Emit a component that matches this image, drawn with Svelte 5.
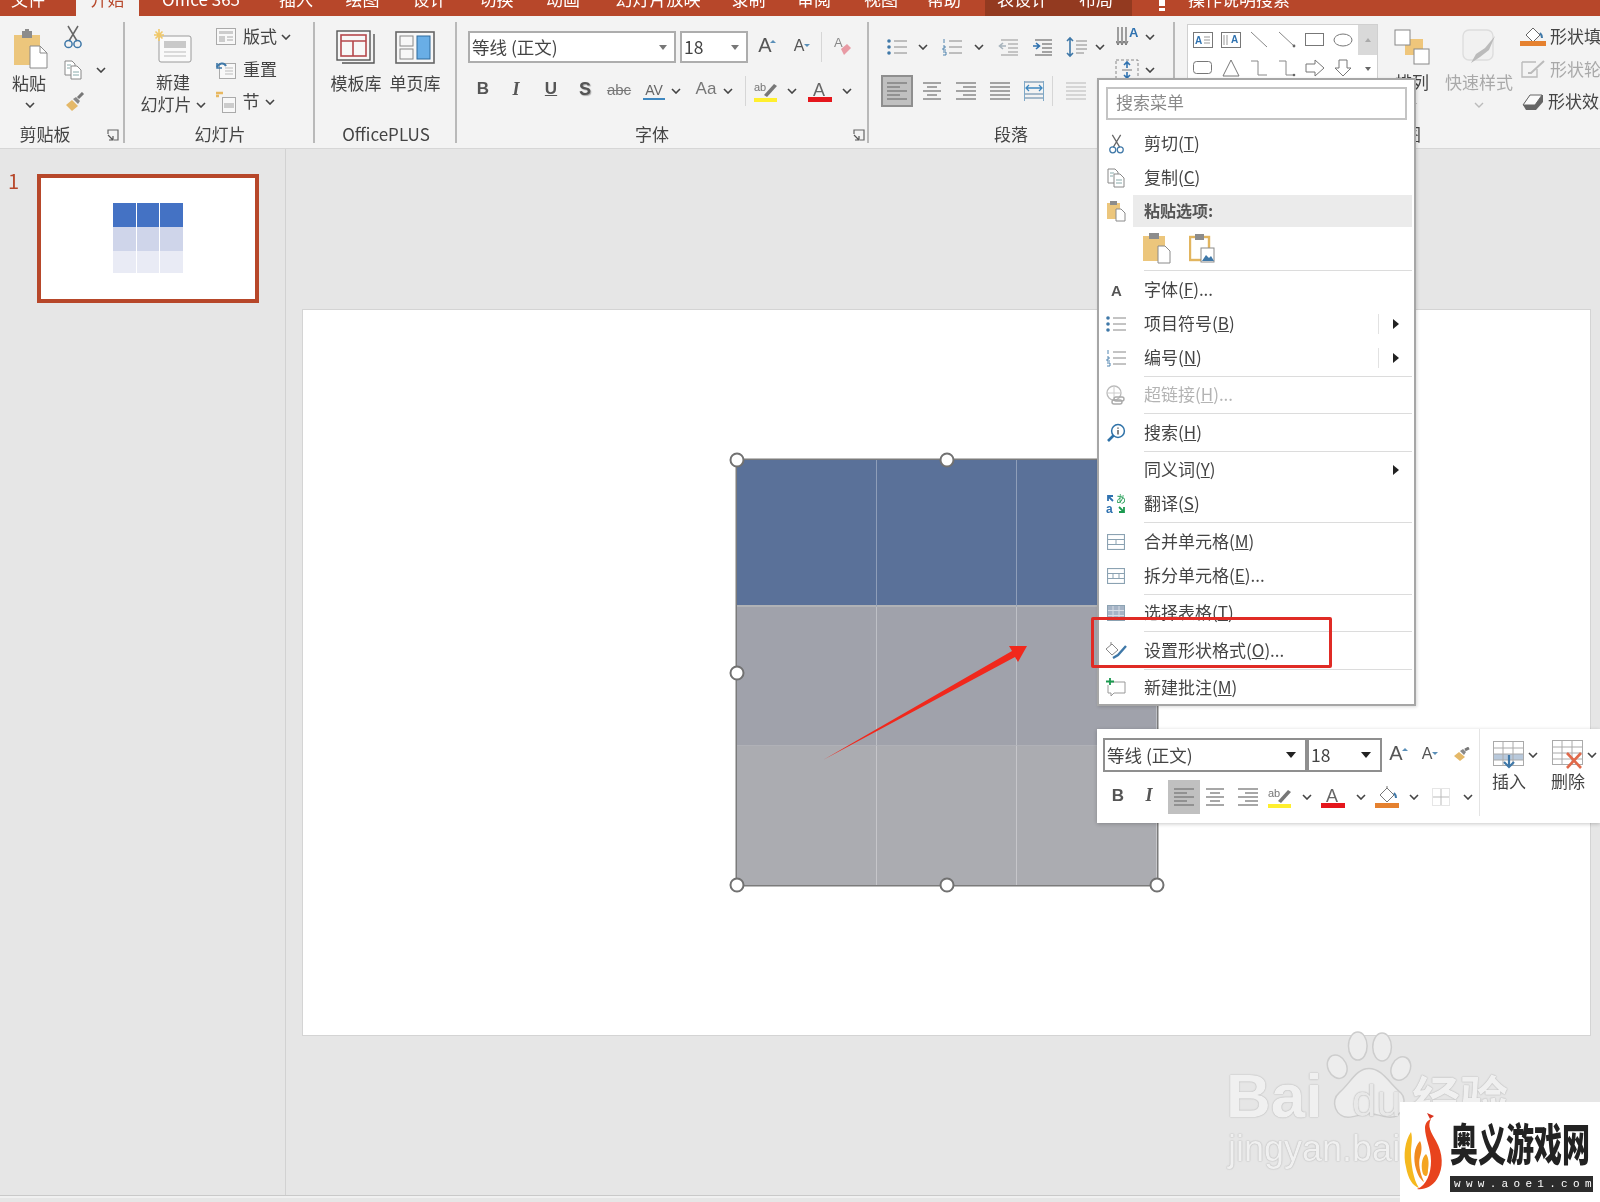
<script>
  const ln = (d, c = '#8a8a8a', w = 1) => `<path d="${d}" stroke="${c}" stroke-width="${w}"/>`;
  const bars = (arr, c = '#777') => arr.map(([a, b, y]) => ln(`M${a} ${y}H${b}`, c, 1.3)).join('');
  const ics = {
    chev: [10, 6, ln('M1 1l4 4 4-4', '#444', 1.6)],
    chevL: [10, 6, ln('M1 1l4 4 4-4', '#bbb', 1.4)],
    launch: [12, 12, ln('M1 5V1h10v10H7', '#666', 1.2) + ln('M1 6l5 5M6 7v4H2', '#555', 1.2)],
    paste: [34, 40, `<rect x="0" y="6" width="26" height="30" fill="#ecc67c"/><rect x="8" y="2" width="10" height="7" fill="#8c8c8c"/><rect x="11" y="0" width="4" height="4" fill="#8c8c8c"/><path d="M16 17h10l7 7v15H16z" fill="#fff" stroke="#8a8a8a"/><path d="M26 17v7h7" stroke="#8a8a8a"/>`],
    paste2: [28, 32, `<rect x="0" y="4" width="22" height="25" fill="#ecc67c"/><rect x="6" y="1" width="10" height="6" fill="#8c8c8c"/><path d="M15 14h7l5 5v12H15z" fill="#fff" stroke="#8a8a8a"/>`],
    pasteImg: [26, 30, `<rect x="1" y="4" width="19" height="23" fill="#fff" stroke="#e2b55f" stroke-width="2.4"/><rect x="6" y="1" width="9" height="6" fill="#8c8c8c"/><rect x="12" y="15" width="13" height="14" fill="#fff" stroke="#8a8a8a"/><path d="M13 28l4-6 3 3 2-2 3 5z" fill="#3f78a8"/>`],
    pasteS: [20, 22, `<rect x="1" y="3" width="13" height="16" fill="#ecc67c"/><rect x="4" y="1" width="7" height="4" fill="#8c8c8c"/><path d="M10 9h5l4 4v8h-9z" fill="#fff" stroke="#8a8a8a"/>`],
    cut: [20, 24, ln('M5 1l9 15M15 1L6 16', '#666', 1.5) + `<circle cx="5.5" cy="19" r="3.6" stroke="#3f78a8" stroke-width="1.5"/><circle cx="14.5" cy="19" r="3.6" stroke="#3f78a8" stroke-width="1.5"/>`],
    copy: [18, 20, `<path d="M1 1h7l3 3v11H1z" fill="#fff" stroke="#888"/><path d="M7 6h6l4 4v9H7z" fill="#fff" stroke="#888"/>` + ln('M3 5h4M3 8h3M9 12h6M9 15h6', '#8aa')],
    painter: [20, 20, `<path d="M1 13l6-5 6 6-6 5z" fill="#e4b868"/><path d="M8 7l3-2 4 4-2 3z" fill="#888"/>` + ln('M13 6l5-5', '#777', 3)],
    newslide: [38, 34, `<rect x="5" y="7" width="32" height="26" rx="2" fill="#fafafa" stroke="#9a9a9a"/><rect x="10" y="12" width="22" height="7" fill="#c9c9c9"/>` + ln('M10 23h22M10 27h22', '#bbb') + ln('M5 0v12M0 6h10M1.5 2.5l7 7M8.5 2.5l-7 7', '#f0c868', 1.6)],
    layout: [20, 18, `<rect x=".5" y=".5" width="19" height="16" fill="#f8f8f8" stroke="#aaa"/><rect x="3" y="3" width="14" height="3" fill="#ccc"/><rect x="3" y="8" width="6" height="6" fill="#ccc"/>` + ln('M11 9h6M11 12h6', '#aaa')],
    reset: [20, 18, `<rect x="3.5" y="2.5" width="16" height="15" fill="#f8f8f8" stroke="#aaa"/>` + ln('M9 7h8M9 10h8M9 13h8', '#bbb') + ln('M1 6c2-4 7-5 9-1', '#3f78a8', 2) + ln('M1 2v5h5', '#3f78a8', 1.6)],
    section: [20, 22, `<rect x="6.5" y="6.5" width="13" height="15" fill="#f8f8f8" stroke="#aaa"/><rect x="8" y="12" width="10" height="5" fill="#ccc"/>` + ln('M0 2h7M0 5h3', '#e8b860', 2.4)],
    tmpl: [40, 36, ln('M38 4v29H6', '#555', 1.4) + `<rect x="1" y="1" width="33" height="29" fill="#f7f7f7" stroke="#555" stroke-width="1.4"/><rect x="5" y="5" width="25" height="21" stroke="#b5484c" stroke-width="1.6"/>` + ln('M5 11h25M17 11v15', '#b5484c', 1.6)],
    single: [40, 34, `<rect x="1" y="1" width="38" height="31" fill="#f7f7f7" stroke="#666" stroke-width="1.6"/><rect x="5" y="5" width="13" height="10" stroke="#888"/><rect x="5" y="18" width="13" height="10" stroke="#888"/><rect x="22" y="5" width="13" height="23" fill="#69aee6" stroke="#2f6a9c"/>`],
    clear: [18, 22, `<path d="M7 13l6-5 4 4-7 7z" fill="#e89aa4"/><text x="0" y="11" font-size="13" fill="#888" font-family="Liberation Sans">A</text>`],
    highlight: [24, 22, `<text x="0" y="11" font-size="11" fill="#777" font-family="Liberation Sans">ab</text><path d="M10 15l10-11 3 2-10 11z" fill="#777"/><rect x="0" y="18" width="23" height="5" fill="#ffef2e"/>`],
    colorA: [24, 22, `<text x="5" y="16" font-size="18" fill="#666" font-family="Liberation Sans">A</text><rect x="0" y="17" width="24" height="5" fill="#e5161c"/>`],
    fill: [24, 24, `<path d="M5 10l7-7 7 7-7 7z" fill="#fff" stroke="#777"/>` + ln('M12 3v-2', '#777') + ln('M19 8c2 2 2 4 2 5', '#3f78a8', 2) + `<rect x="0" y="18" width="24" height="5" fill="#e5812f"/>`],
    bullets: [20, 18, `<circle cx="2" cy="3" r="1.8" fill="#3f78a8"/><circle cx="2" cy="9" r="1.8" fill="#3f78a8"/><circle cx="2" cy="15" r="1.8" fill="#3f78a8"/>` + ln('M7 3h13M7 9h13M7 15h13', '#888')],
    numbers: [20, 18, ln('M2 1v4M1 8h2v2H1v2h3M1 14h3v3H1', '#3f78a8', .9) + ln('M7 3h13M7 9h13M7 15h13', '#888')],
    outdent: [20, 18, bars([[3, 20, 2], [10, 20, 6], [10, 20, 10], [10, 20, 14], [3, 20, 17]], '#aaa') + ln('M8 8H2M5 5L1.5 8 5 11', '#a8b4bd', 1.6)],
    indent: [20, 18, bars([[3, 20, 2], [10, 20, 6], [10, 20, 10], [10, 20, 14], [3, 20, 17]], '#777') + ln('M1 8h6M4 5l3.5 3L4 11', '#2f72b0', 1.6)],
    spacing: [22, 22, ln('M4 2v18M1 5l3-3 3 3M1 17l3 3 3-3', '#3f78a8', 1.6) + ln('M10 5h11M10 9h11M10 13h11M10 17h8', '#888')],
    textdir: [24, 24, ln('M2 2v16M6 2v16M10 2v16', '#666', 1.2) + ln('M0 16l2 4 2-4M4 16l2 4 2-4M8 16l2 4 2-4', '#666', 1) + `<text x="13" y="12" font-size="13" fill="#2f72b0" font-weight="700" font-family="Liberation Sans">A</text>`],
    valign: [24, 24, `<rect x="1" y="2" width="22" height="20" stroke="#888" stroke-dasharray="3 2"/>` + ln('M12 4v6M9 7l3-3 3 3M12 14v6M9 17l3 3 3-3', '#2f72b0', 1.6) + ln('M7 12h10', '#777')],
    arrange: [36, 36, `<rect x="11" y="10" width="18" height="16" fill="#efc67b"/><rect x="1" y="1" width="15" height="15" fill="#fff" stroke="#888"/><rect x="20" y="20" width="15" height="15" fill="#fff" stroke="#888"/>`],
    quick: [34, 36, `<rect x="1" y="1" width="30" height="30" rx="6" fill="#f1f1f1" stroke="#ddd" stroke-width="1.4"/><path d="M9 34l5-9 9-6 10-12-6 14-9 7z" fill="#bbb"/>`],
    shapeFill: [26, 22, `<path d="M6 9l7-7 7 7-7 7z" fill="#fff" stroke="#666"/>` + ln('M20 7c2 2 2 4 2 5', '#3f78a8', 2) + `<rect x="0" y="15" width="26" height="5" fill="#e5812f"/>`],
    shapeLine: [24, 20, `<path d="M1 2h14M1 2v15h15V9" stroke="#bbb" stroke-width="1.4"/><path d="M7 13l3 0L23 1" stroke="#bbb" stroke-width="2"/>`],
    shapeFx: [24, 20, `<path d="M2 13L9 3h13v7l-7 8H5z" fill="#666"/><path d="M2 13L9 3h12l-7 10z" fill="#fafafa" stroke="#666"/>`],
    sTextbox: [20, 16, `<rect x=".5" y=".5" width="19" height="15" stroke="#777"/><text x="2" y="12" font-size="10" font-weight="700" fill="#2f72b0" font-family="Liberation Sans">A</text>` + ln('M11 5h6M11 8h6M11 11h6', '#999')],
    sVText: [20, 16, `<rect x=".5" y=".5" width="19" height="15" stroke="#777"/><text x="10" y="11" font-size="10" font-weight="700" fill="#2f72b0" font-family="Liberation Sans">A</text>` + ln('M3 3v10M6 3v10', '#999')],
    sLine: [18, 18, ln('M1 1l16 15', '#888')],
    sArrow: [18, 18, ln('M1 1l15 14', '#888') + `<circle cx="16" cy="15" r="1.4" fill="#666"/>`],
    sRect: [20, 14, `<rect x=".5" y=".5" width="18" height="12" stroke="#777"/>`],
    sOval: [20, 14, `<ellipse cx="10" cy="7" rx="9" ry="6" stroke="#777"/>`],
    sRound: [20, 14, `<rect x=".5" y=".5" width="18" height="12" rx="3" stroke="#777"/>`],
    sTri: [18, 18, `<path d="M9 1l8 16H1z" stroke="#777"/>`],
    sElbow: [18, 18, ln('M1 2h7v14h9', '#888')],
    sElbowA: [18, 18, ln('M1 2h7v14h8', '#888') + `<circle cx="16" cy="16" r="1.3" fill="#666"/>`],
    sRight: [20, 18, `<path d="M1 5h9V1l9 8-9 8v-4H1z" stroke="#777"/>`],
    sDown: [18, 18, `<path d="M5 1h8v8h4l-8 8-8-8h4z" stroke="#777"/>`],
    letterA: [18, 18, `<text x="4" y="15" font-size="15" font-weight="700" fill="#555" font-family="Liberation Sans">A</text>`],
    link: [20, 20, `<circle cx="8" cy="8" r="7" stroke="#bbb" stroke-width="1.3"/>` + ln('M1 8h14M8 1v14', '#ccc') + `<rect x="8" y="12" width="10" height="4" rx="2" stroke="#aaa" stroke-width="1.4"/><rect x="6" y="15" width="10" height="4" rx="2" stroke="#aaa" stroke-width="1.4"/>`],
    search: [20, 20, `<circle cx="12" cy="8" r="6.4" stroke="#2f72a8" stroke-width="1.5"/>` + ln('M7.5 12.5L2 18', '#2f72a8', 2.6) + ln('M12 7v4.5', '#444', 1.3) + ln('M12 4.5v1.2', '#444', 1.3)],
    translate: [20, 20, `<text x="10" y="9" font-size="10" fill="#1c9a50" font-family="Noto Sans CJK JP">あ</text><text x="0" y="19" font-size="12" font-weight="700" fill="#2f72b0" font-family="Liberation Sans">a</text>` + ln('M2 2l5 5M2 7V2h5', '#2f72b0', 1.8) + ln('M18 18l-5-5M18 13v5h-5', '#1c9a50', 1.8)],
    merge: [18, 16, `<rect x=".5" y=".5" width="17" height="15" stroke="#8ba2b2" stroke-width="1.2"/>` + ln('M1 5.5h16M1 10.5h16M9 5.5v5', '#8ba2b2')],
    split: [18, 16, `<rect x=".5" y=".5" width="17" height="15" stroke="#8ba2b2" stroke-width="1.2"/>` + ln('M1 5.5h16M1 10.5h16M6 5.5v5M12 5.5v5', '#8ba2b2')],
    selTable: [18, 16, `<rect x=".5" y=".5" width="17" height="15" fill="#a6b4c6" stroke="#8ba2b2"/>` + ln('M1 5.5h16M1 10.5h16M6 1v14M12 1v14', '#d6dde5')],
    fmt: [22, 20, `<path d="M1 8l6-5 6 6-6 5z" fill="#fff" stroke="#888"/>` + ln('M6 1v3', '#888') + ln('M8 17l5-3 8-9', '#3f78a8', 2.4)],
    comment: [20, 20, `<path d="M4 4h15v11H8l-3 3v-3H2V7" stroke="#999"/>` + ln('M4 0v7M0 3.5h8', '#1c9a50', 1.8)],
    miniPainter: [18, 16, `<path d="M1 9l5-4 6 5-5 4z" fill="#e4b868"/><path d="M7 4l3-2 3 3-2 3z" fill="#888"/>` + ln('M12 3l4-2', '#777', 3)],
    border: [18, 18, `<rect x=".5" y=".5" width="17" height="17" stroke="#ccc" stroke-dasharray="1 1"/>` + ln('M1 9h16M9 1v16', '#bbb')],
    insert: [32, 28, `<rect x=".5" y=".5" width="30" height="24" fill="#fff" stroke="#aaa"/><rect x="1" y="13" width="29" height="6" fill="#b8c9dc"/>` + ln('M1 7h30M1 13h30M1 19h30M10 1v24M20 1v24', '#aaa') + ln('M16 14v11M11 21l5 5 5-5', '#3f78a8', 2.2)],
    remove: [32, 30, `<rect x=".5" y=".5" width="30" height="24" fill="#fff" stroke="#aaa"/>` + ln('M1 7h30M1 13h30M1 19h30M10 1v24M20 1v24', '#aaa') + ln('M15 13l14 15M29 13L15 28', '#e0694a', 2.6)]
  };
  const aligns = {
    aLeft: [[0, 20, 2], [0, 13, 6], [0, 20, 10], [0, 13, 14], [0, 20, 18]],
    aCenter: [[1, 19, 2], [5, 15, 6], [1, 19, 10], [5, 15, 14], [1, 19, 18]],
    aRight: [[0, 20, 2], [7, 20, 6], [0, 20, 10], [7, 20, 14], [0, 20, 18]],
    aJust: [[0, 20, 2], [0, 20, 6], [0, 20, 10], [0, 20, 14], [0, 20, 18]],
    aCols: [[0, 20, 2], [0, 20, 6], [0, 20, 10], [0, 20, 14], [0, 20, 18]]
  };
  for (const k in aligns) ics[k] = [20, 20, bars(aligns[k], k === 'aCols' ? '#c4c4c4' : '#777')];
  ics.aDist = [20, 22, bars([[1, 19, 2], [1, 19, 14], [1, 19, 18]], '#7a9ab4') + ln('M2 8h16M5 5L2 8l3 3M15 5l3 3-3 3', '#3f88c0', 1.3) + ln('M.5 1v20M19.5 1v20', '#7fa9c8')];

  const svg = (n, w, h) => {
    const [vw, vh, body] = ics[n];
    return `<svg width="${w ?? vw}" height="${h ?? vh}" viewBox="0 0 ${vw} ${vh}" fill="none" style="display:block">${body}</svg>`;
  };
  const i = (c, n, w, h) => ({ c, w: w ?? ics[n][0], html: svg(n, w, h) });
  const t = (c, text, w, cls = '') => ({ c, w, text, cls });
  const ch = (c) => i(c, 'chev');

  function place(start, items) {
    let x = start;
    return items.map((it) => {
      const ml = it.c - it.w / 2 - x;
      x = it.c + it.w / 2;
      return { ...it, ml };
    });
  }

  const tabs = [
    ['文件', 76, 'first'], ['开始', 63, 'active'], ['Office 365', 124, ''], ['插入', 66, ''], ['绘图', 67, ''], ['设计', 67, ''],
    ['切换', 67, ''], ['动画', 66, ''], ['幻灯片放映', 124, ''], ['录制', 57, ''], ['审阅', 74, ''], ['视图', 60, ''], ['帮助', 66, ''],
    ['', 8, ''], ['表设计', 75, 'dark'], ['布局', 72, 'dark']
  ];

  const gallery = ['sTextbox', 'sVText', 'sLine', 'sArrow', 'sRect', 'sOval', 'sRound', 'sTri', 'sElbow', 'sElbowA', 'sRight', 'sDown'];

  const menu = [
    { ic: 'cut', a: '剪切', k: 'T' }, { ic: 'copy', a: '复制', k: 'C' }, { head: true }, { icons: true }, { sep: true },
    { ic: 'letterA', a: '字体', k: 'F', more: true }, { ic: 'bullets', a: '项目符号', k: 'B', sub: true }, { ic: 'numbers', a: '编号', k: 'N', sub: true }, { sep: true },
    { ic: 'link', a: '超链接', k: 'H', more: true, off: true }, { sep: true },
    { ic: 'search', a: '搜索', k: 'H' }, { sep: true },
    { a: '同义词', k: 'Y', sub: true, nobar: true }, { ic: 'translate', a: '翻译', k: 'S' }, { sep: true },
    { ic: 'merge', a: '合并单元格', k: 'M' }, { ic: 'split', a: '拆分单元格', k: 'E', more: true }, { sep: true },
    { ic: 'selTable', a: '选择表格', k: 'T' }, { sep: true },
    { ic: 'fmt', a: '设置形状格式', k: 'O', more: true }, { sep: true },
    { ic: 'comment', a: '新建批注', k: 'M' }
  ];
</script>

{#snippet row(start, items, cls = '')}
  <div class="row {cls}">
    {#each place(start, items) as it}
      <span class="cell {it.cls ?? ''}" class:tx={!it.html} style="margin-left:{it.ml}px;width:{it.w}px">
        {#if it.html}{@html it.html}{:else}{it.text}{/if}
      </span>
    {/each}
  </div>
{/snippet}

<div class="app">
  <header class="tabs">
    {#each tabs as [label, w, cls]}
      <div class="tab {cls}" style="width:{w}px"><span>{label}</span></div>
    {/each}
    <div class="tell">
      <svg width="12" height="14" viewBox="0 0 12 14" fill="none"><path d="M3 0h6v6H3zM3 8h6v3H3z" fill="#fff"/></svg>
      <span>操作说明搜索</span>
    </div>
  </header>

  <section class="ribbon">
    <div class="group g1">
      <div class="body flexrow">
        <div class="big w-paste">
          {@render row(0, [i(31, 'paste')], 'h38 pt14')}
          {@render row(0, [t(29, '粘贴', 40)], 'h32')}
          {@render row(0, [ch(30)], 'h10')}
        </div>
        <div class="small">
          {@render row(60, [i(73, 'cut')])}
          {@render row(60, [i(73, 'copy'), ch(101)])}
          {@render row(60, [i(75, 'painter')])}
        </div>
      </div>
      {@render row(0, [t(45, '剪贴板', 60), i(113, 'launch')], 'label')}
    </div>

    <div class="group g2">
      <div class="body flexrow">
        <div class="big w-new">
          {@render row(126, [i(173, 'newslide')], 'h33 pt13')}
          {@render row(126, [t(173, '新建', 40)], 'h22 mt10')}
          {@render row(126, [t(166, '幻灯片', 52), ch(201)], 'h22')}
        </div>
        <div class="small">
          {@render row(216, [i(226, 'layout'), t(260, '版式', 36), ch(286)])}
          {@render row(216, [i(226, 'reset'), t(260, '重置', 36)])}
          {@render row(216, [i(226, 'section'), t(251, '节', 18), ch(270)])}
        </div>
      </div>
      {@render row(126, [t(220, '幻灯片', 60)], 'label')}
    </div>

    <div class="group g3">
      <div class="body">
        {@render row(316, [i(356, 'tmpl'), i(415, 'single')], 'h36 pt14')}
        {@render row(316, [t(356, '模板库', 54), t(415, '单页库', 54)], 'h24 mt6')}
      </div>
      {@render row(316, [t(386, 'OfficePLUS', 100)], 'label')}
    </div>

    <div class="group g4">
      <div class="body two">
        {@render row(458, [t(572, '等线 (正文)', 208, 'combo'), t(714, '18', 68, 'combo'), t(765, 'A', 18, 'gA'), t(799, 'A', 16, 'sA'), t(821, '', 1, 'vbar'), i(843, 'clear')])}
        {@render row(458, [
          t(483, 'B', 16, 'fb'), t(516, 'I', 14, 'fi'), t(551, 'U', 16, 'fu'), t(585, 'S', 16, 'fs'), t(619, 'abc', 24, 'fx'),
          t(654, 'AV', 22, 'fav'), ch(676), t(706, 'Aa', 24, 'faa'), ch(728), t(745, '', 1, 'vbar'), i(766, 'highlight'), ch(792), i(820, 'colorA'), ch(847)
        ])}
      </div>
      {@render row(458, [t(652, '字体', 40), i(859, 'launch')], 'label')}
    </div>

    <div class="group g5">
      <div class="body flexrow">
        <div class="two w-para">
          {@render row(870, [i(897, 'bullets'), ch(923), i(952, 'numbers'), ch(979), i(1008, 'outdent'), i(1042, 'indent'), i(1077, 'spacing'), ch(1100)])}
          {@render row(870, [{ ...i(897, 'aLeft'), w: 32, cls: 'sel' }, i(932, 'aCenter'), i(966, 'aRight'), i(1000, 'aJust'), i(1034, 'aDist'), t(1052, '', 1, 'vbar'), i(1076, 'aCols')])}
        </div>
        <div class="small">
          {@render row(1110, [i(1128, 'textdir'), ch(1150)])}
          {@render row(1110, [i(1127, 'valign'), ch(1150)])}
        </div>
      </div>
      {@render row(870, [t(1011, '段落', 40)], 'label')}
    </div>

    <div class="group g6">
      <div class="body flexrow">
        <div class="gallery">
          <div class="shapes">
            {#each gallery as g}<span class="shape">{@html svg(g)}</span>{/each}
          </div>
          <div class="scroll">
            <span class="up"></span>
            <span class="down"></span>
          </div>
        </div>
        <div class="big w-arr">
          {@render row(1378, [i(1412, 'arrange'), i(1479, 'quick')], 'h36 pt13')}
          {@render row(1378, [t(1412, '排列', 40), t(1479, '快速样式', 72, 'dim')], 'h24 mt6')}
          {@render row(1378, [ch(1412), i(1479, 'chevL')], 'h10 mt5')}
        </div>
        <div class="small">
          {@render row(1518, [i(1533, 'shapeFill'), t(1584, '形状填充', 68)])}
          {@render row(1518, [i(1533, 'shapeLine'), t(1584, '形状轮廓', 68, 'dim')])}
          {@render row(1518, [i(1533, 'shapeFx'), t(1582, '形状效果', 68)])}
        </div>
      </div>
      {@render row(1175, [t(1404, '绘图', 40)], 'label')}
    </div>
  </section>

  <main class="main">
    <aside class="pane">
      <span class="num">1</span>
      <div class="thumb">
        <div class="mini-table">
          <div class="m1"></div><div class="m1"></div><div class="m1"></div>
          <div class="m2"></div><div class="m2"></div><div class="m2"></div>
          <div class="m3"></div><div class="m3"></div><div class="m3"></div>
        </div>
      </div>
    </aside>
    <div class="canvas">
      <div class="slide">
        <div class="table">
          <div class="c h"></div><div class="c h"></div><div class="c h"></div>
          <div class="c r2"></div><div class="c r2"></div><div class="c r2"></div>
          <div class="c r3"></div><div class="c r3"></div><div class="c r3"></div>
          <span class="hd tl"></span><span class="hd tm"></span><span class="hd tr"></span>
          <span class="hd ml"></span><span class="hd mr"></span>
          <span class="hd bl"></span><span class="hd bm"></span><span class="hd br"></span>
        </div>
      </div>
    </div>
  </main>
  <footer class="status"></footer>

  <svg class="arrow" width="220" height="120" viewBox="820 645 220 120">
    <path d="M823 760L1012 651 1009 646 1027 646 1018 662 1015 657Z" fill="#f1281c" />
  </svg>

  <div class="ctx">
    <div class="ctx-search"><span>搜索菜单</span></div>
    {#each menu as m}
      {#if m.sep}
        <div class="sep"></div>
      {:else if m.head}
        <div class="item headrow"><span class="mi">{@html svg('pasteS', 20, 22)}</span><span class="band">粘贴选项:</span></div>
      {:else if m.icons}
        <div class="pasteicons">{@html svg('paste2', 28, 32)}{@html svg('pasteImg', 26, 30)}</div>
      {:else}
        <div class="item" class:off={m.off}>
          <span class="mi">{#if m.ic}{@html m.ic === 'cut' ? svg('cut', 17, 20) : svg(m.ic)}{/if}</span>
          <span class="mt">{m.a}(<u>{m.k}</u>){m.more ? '...' : ''}</span>
          {#if m.sub}<span class="subarrow" class:nobar={m.nobar}></span>{/if}
        </div>
      {/if}
    {/each}
  </div>

  <div class="redbox"></div>

  <div class="minibar">
    <div class="mini-left">
      {@render row(1097, [t(1205, '等线 (正文)', 204, 'combo blk'), t(1344.5, '18', 75, 'combo blk'), t(1396, 'A', 20, 'gA'), t(1427, 'A', 16, 'sA'), i(1462, 'miniPainter')], 'h34')}
      {@render row(1097, [
        t(1118, 'B', 16, 'fb'), t(1149, 'I', 14, 'fi'), { ...i(1184, 'aLeft'), w: 32, cls: 'sel tall' }, i(1215, 'aCenter'), i(1248, 'aRight'),
        i(1280, 'highlight'), ch(1307), i(1333, 'colorA'), ch(1361), i(1387, 'fill'), ch(1414), i(1441, 'border'), ch(1468)
      ], 'h34')}
    </div>
    <div class="mini-right">
      {@render row(1480, [i(1509, 'insert'), ch(1533), i(1568, 'remove'), ch(1592)], 'h30')}
      {@render row(1480, [t(1509, '插入', 40), t(1568, '删除', 40)], 'h24')}
    </div>
  </div>

  <div class="wm">
    <span class="wm-bai">Bai</span>
    <svg class="wm-paw" width="86" height="92" viewBox="0 0 92 96">
      <g fill="#ededed" stroke="#cdcdcd" stroke-width="1.6">
        <ellipse cx="34" cy="16" rx="10" ry="15" />
        <ellipse cx="60" cy="17" rx="10" ry="15" />
        <ellipse cx="12" cy="38" rx="10" ry="13" transform="rotate(-25 12 38)" />
        <ellipse cx="80" cy="40" rx="10" ry="13" transform="rotate(25 80 40)" />
        <path d="M46 40c14 0 22 16 34 26 8 8 2 28-14 26-8-1-14-4-20-4s-12 3-20 4C10 94 4 74 14 66c12-10 18-26 32-26z" />
      </g>
    </svg>
    <span class="wm-du">du</span>
    <span class="wm-jy">经验</span>
    <span class="wm-url">jingyan.bai</span>
  </div>

  <div class="logo">
    <svg class="flame" width="42" height="78" viewBox="0 0 42 78">
      <path d="M28 6c-4 7 0 13 5 22 7 12 8 27 1 38-5 8-13 11-20 10 10-4 14-16 14-28 0-13-6-23-6-33 0-5 3-8 6-9z" fill="#e8431d" />
      <path d="M8 19C2 28 0 42 3 54c2 12 7 19 13 21-6-9-8-25-8-35 0-8 2-14 0-21z" fill="#f5b91f" />
      <path d="M17 28c-6 6-7 18-4 28 2 7 5 11 8 13-4-9-6-19-4-25 2-6 2-12 0-16z" fill="#f08a1f" />
      <path d="M23 41c-5 4-5 14-3 20 3 4 5 2 5-4 1-6 1-12-2-16z" fill="#f4a521" />
      <path d="M24 0l7 3-4 3z" fill="#d8301c" />
    </svg>
    <div class="logo-text">
      <div class="logo-cn">奥义游戏网</div>
      <div class="logo-url">www.aoe1.com</div>
    </div>
  </div>
</div>

<style>
  :global(body) { margin: 0; background: #e6e6e6; }
  .app {
    position: relative; width: 1600px; height: 1202px; overflow: hidden;
    display: flex; flex-direction: column; background: #e6e6e6; color: #444;
    font-family: "Noto Sans CJK SC", "Liberation Sans", sans-serif; font-size: 17px;
    filter: blur(0.5px);
  }
  .tabs { height: 16px; flex: none; display: flex; background: #b7472a; color: #fff; font-size: 17px; overflow: hidden; }
  .tab { height: 16px; flex: none; text-align: center; line-height: 16px; }
  .tab span { display: block; margin-top: -9px; white-space: nowrap; }
  .tab.first { padding-right: 20px; box-sizing: border-box; }
  .tab.active { background: #f3f3f3; color: #b7472a; }
  .tab.dark { background: #933a20; }
  .tell { display: flex; margin-left: 24px; gap: 20px; align-items: flex-start; }
  .tell span { margin-top: -9px; line-height: 16px; }
  .ribbon { height: 132px; flex: none; display: flex; background: #f3f3f3; border-bottom: 1px solid #d6d6d6; box-sizing: content-box; }
  .group { position: relative; flex: none; display: flex; flex-direction: column; height: 132px; }
  .group::after { content: ""; position: absolute; right: 1px; top: 6px; bottom: 5px; width: 2px; background: #b9b9b9; }
  .g1 { width: 126px; } .g2 { width: 190px; } .g3 { width: 142px; } .g4 { width: 412px; } .g5 { width: 305px; }
  .g5::after { right: 0; }
  .g6 { width: 425px; }
  .g6::after { display: none; }
  .body { height: 106px; flex: none; }
  .flexrow { display: flex; }
  .w-paste { width: 60px; } .w-new { width: 90px; } .w-para { width: 240px; } .w-arr { width: 140px; }
  .big { flex: none; }
  .small { padding-top: 5px; flex: none; }
  .two { padding-top: 15px; display: flex; flex-direction: column; gap: 11px; box-sizing: border-box; }
  .row { display: flex; align-items: center; height: 32.5px; white-space: nowrap; }
  .cell { flex: none; display: flex; justify-content: center; align-items: center; white-space: nowrap; }
  .tx { padding-bottom: 3px; box-sizing: border-box; }
  .h38 { height: 38px; margin-top: 14px; } .h32 { height: 32px; } .h10 { height: 10px; }
  .h33 { height: 33px; margin-top: 13px; } .h22 { height: 22px; } .h36 { height: 36px; } .h24 { height: 24px; } .h34 { height: 34px; } .h30 { height: 30px; }
  .pt14 { margin-top: 14px; } .pt13 { margin-top: 13px; } .mt10 { margin-top: 10px; } .mt6 { margin-top: 6px; } .mt5 { margin-top: 5px; }
  .label { height: 26px; color: #444; }
  .dim { color: #a9a9a9; }
  .combo {
    position: relative; height: 32px; box-sizing: border-box; border: 2px solid #adadad; background: #fff;
    justify-content: flex-start; padding: 0 0 1px 2px; font-size: 17.5px; color: #444;
  }
  .combo::after {
    content: ""; position: absolute; right: 7px; top: 12px; border: 4px solid transparent; border-top: 5px solid #777; border-bottom: 0;
  }
  .blk { height: 34px; border-color: #8f8f8f; }
  .blk::after { border-width: 5px; border-top: 6px solid #222; border-bottom: 0; right: 9px; }
  .gA { font: 20px "Liberation Sans", sans-serif; color: #555; position: relative; }
  .gA::after { content: ""; position: absolute; right: -2px; top: 6px; border: 3px solid transparent; border-bottom: 3px solid #5a8fb8; border-top: 0; }
  .sA { font: 16px "Liberation Sans", sans-serif; color: #555; position: relative; }
  .sA::after { content: ""; position: absolute; right: -3px; top: 7px; border: 3px solid transparent; border-top: 3px solid #5a8fb8; border-bottom: 0; }
  .vbar { height: 30px; background: #d6d6d6; padding: 0; }
  .fb { font: bold 17px "Liberation Sans", sans-serif; color: #555; }
  .fi { font: italic bold 18px "Liberation Serif", serif; color: #555; }
  .fu { font: bold 17px "Liberation Sans", sans-serif; color: #555; text-decoration: underline; }
  .fs { font: bold 18px "Liberation Sans", sans-serif; color: #555; text-shadow: 1px 1px 1px #aaa; }
  .fx { font: 15px "Liberation Sans", sans-serif; color: #777; text-decoration: line-through; }
  .fav { font: 14px "Liberation Sans", sans-serif; color: #666; border-bottom: 2px solid #3f88c0; line-height: 16px; padding: 0; }
  .faa { font: 17px "Liberation Sans", sans-serif; color: #777; }
  .sel { height: 32px; background: #c0c0c0; border: 2px solid #8e8e8e; box-sizing: border-box; }
  .tall { height: 34px; border: 0; }
  .gallery { margin: 8px 0 0 12px; width: 191px; height: 74px; flex: none; display: flex; background: #fff; border: 1px solid #d0d0d0; box-sizing: border-box; }
  .shapes { display: grid; grid-template-columns: repeat(6, 28px); grid-auto-rows: 28px; padding: 1px 0 0 1px; width: 169px; flex: none; }
  .shape { display: flex; align-items: center; justify-content: center; }
  .scroll { flex: 1; display: flex; flex-direction: column; }
  .up { height: 30px; background: #d9d9d9; position: relative; }
  .up::after { content: ""; position: absolute; left: 7px; top: 13px; border: 3.5px solid transparent; border-bottom: 4px solid #aaa; border-top: 0; }
  .down { flex: 1; position: relative; }
  .down::after { content: ""; position: absolute; left: 7px; top: 12px; border: 3.5px solid transparent; border-top: 4px solid #666; border-bottom: 0; }
  .main { flex: 1; display: flex; min-height: 0; }
  .pane { flex: none; border-right: 1px solid #d2d2d2; padding: 25px 0 0 8px; box-sizing: content-box; display: flex; align-items: flex-start; width: 277px; }
  .num { color: #b7472a; font-size: 20px; line-height: 16px; width: 29px; flex: none; margin-top: -1px; }
  .thumb { width: 222px; height: 129px; box-sizing: border-box; border: 4px solid #b7472a; background: #fff; flex: none; position: relative; }
  .mini-table { position: absolute; left: 72px; top: 25px; width: 70px; display: grid; grid-template-columns: repeat(3, 1fr); grid-template-rows: 24px 24px 22px; gap: 0 1px; }
  .m1 { background: #4472c4; } .m2 { background: #cfd5ea; } .m3 { background: #e9ebf5; }
  .canvas { flex: 1; padding: 161px 0 0 17px; min-width: 0; }
  .slide { position: relative; width: 1287px; height: 725px; background: #fff; box-shadow: 0 0 0 1px #d4d4d4; }
  .table {
    position: absolute; left: 434px; top: 150px; width: 420px; height: 425px;
    display: grid; grid-template-columns: 140px 140px 140px; grid-template-rows: 147px 139px 139px;
    box-shadow: 0 0 0 1.5px #7b7b7b;
  }
  .c { box-sizing: border-box; border-right: 1px solid rgba(255, 255, 255, .32); }
  .h { background: #5a7199; border-bottom: 2px solid #b0b2b6; }
  .r2 { background: #a0a2ab; border-bottom: 1px solid #b0b1b7; }
  .r3 { background: #abacb1; }
  .hd { position: absolute; width: 15px; height: 15px; box-sizing: border-box; border: 2.5px solid #717171; border-radius: 50%; background: #fff; transform: translate(-50%, -50%); }
  .tl { left: 0; top: 0; } .tm { left: 210px; top: 0; } .tr { left: 420px; top: 0; }
  .ml { left: 0; top: 213px; } .mr { left: 420px; top: 213px; }
  .bl { left: 0; top: 425px; } .bm { left: 210px; top: 425px; } .br { left: 420px; top: 425px; }
  .status { height: 6px; flex: none; border-top: 1px solid #c9c9c9; box-shadow: inset 0 2px 0 #f0f0f0; }
  .arrow { position: absolute; left: 820px; top: 645px; }
  .ctx {
    position: absolute; left: 1097px; top: 78px; width: 319px; height: 628px; box-sizing: border-box;
    background: #fff; border: 2px solid #a6a6a6; box-shadow: 1px 1px 3px rgba(0, 0, 0, .15); display: flex; flex-direction: column;
  }
  .ctx-search { height: 47px; flex: none; padding: 7px 7px 0 7px; box-sizing: border-box; }
  .ctx-search span { display: block; height: 33px; box-sizing: border-box; border: 2px solid #c4c4c4; color: #8a8a8a; line-height: 26px; padding-left: 8px; }
  .item { height: 34px; flex: none; display: flex; align-items: center; color: #444; }
  .item.off { color: #b4b4b4; }
  .mi { width: 34px; flex: none; display: flex; justify-content: center; }
  .mt { margin-left: 11px; white-space: nowrap; flex: 1; padding-bottom: 3px; }
  .headrow { height: 32px; }
  .band { align-self: stretch; height: 32px; flex: 1; margin-right: 2px; padding-left: 11px; background: #ebebeb; font-weight: 700; font-size: 16px; color: #555; line-height: 30px; }
  .pasteicons { height: 42px; flex: none; display: flex; align-items: center; gap: 18px; padding-left: 44px; }
  .sep { height: 3.5px; flex: none; margin: 0 2px 0 45px; position: relative; }
  .sep::after { content: ""; position: absolute; left: 0; right: 0; top: 1px; height: 1px; background: #dcdcdc; }
  .subarrow { width: 33px; height: 20px; flex: none; border-left: 1px solid #e2e2e2; position: relative; margin-right: 2px; }
  .subarrow.nobar { border-left-color: transparent; }
  .subarrow::after { content: ""; position: absolute; left: 14px; top: 5px; border: 5px solid transparent; border-left: 6px solid #222; border-right: 0; }
  .redbox { position: absolute; left: 1091px; top: 617px; width: 241px; height: 51px; box-sizing: border-box; border: 3px solid #e02b25; border-radius: 2px; }
  .minibar {
    position: absolute; left: 1097px; top: 729px; right: 0; height: 94px; background: #fff; box-shadow: 0 1px 4px rgba(0, 0, 0, .22);
    display: flex;
  }
  .mini-left { width: 382px; flex: none; padding-top: 9px; display: flex; flex-direction: column; gap: 8px; border-right: 1px solid #e4e4e4; margin-bottom: 7px; box-sizing: content-box; }
  .mini-right { flex: 1; padding-top: 11px; }
  .wm { position: absolute; left: 1228px; top: 1030px; width: 300px; height: 140px; }
  .wm > span { position: absolute; white-space: nowrap; color: #f0f0f0; text-shadow: 0 0 1.5px #b4b4b4, 0 0 1px #b4b4b4; font-family: "Liberation Sans", sans-serif; font-weight: 700; }
  .wm-bai { left: -2px; top: 31px; font-size: 62px; line-height: 70px; }
  .wm-paw { position: absolute; left: 98px; top: 0; }
  .wm .wm-du { left: 124px; top: 46px; font-size: 44px; line-height: 50px; font-weight: 400; color: #e8e8e8; }
  .wm .wm-jy { left: 184px; top: 37px; font-size: 48px; line-height: 56px; font-family: "Noto Sans CJK SC", sans-serif; }
  .wm .wm-url { left: 0; top: 97px; font-size: 36px; line-height: 44px; font-weight: 400; }
  .logo { position: absolute; left: 1400px; top: 1102px; width: 200px; height: 100px; background: #fff; display: flex; padding: 11px 0 0 3px; box-sizing: border-box; gap: 5px; }
  .logo-cn { color: #222; font-size: 28px; line-height: 36px; height: 63px; font-weight: 900; white-space: nowrap; margin-top: 0; transform: scaleY(1.6); transform-origin: 0 0; font-family: "Noto Sans CJK SC", sans-serif; }
  .logo-url { background: #2c2c2c; color: #fff; width: 143px; height: 16px; font: 11px/16px "Liberation Mono", monospace; letter-spacing: 5.3px; padding-left: 4px; box-sizing: border-box; white-space: nowrap; overflow: hidden; }
</style>
